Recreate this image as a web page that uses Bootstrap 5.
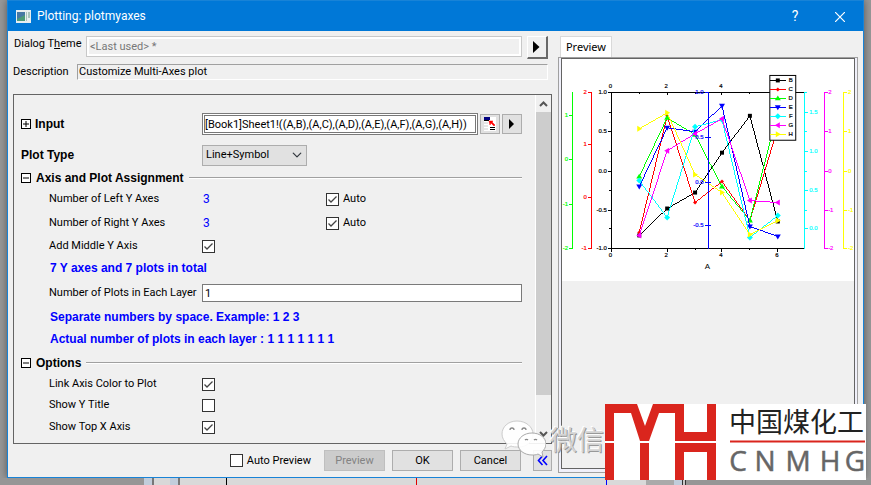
<!DOCTYPE html>
<html lang="en">
<head>
<meta charset="utf-8">
<meta name="viewport" content="width=device-width, initial-scale=1">
<title>Plotting: plotmyaxes</title>
<link href="https://cdn.jsdelivr.net/npm/bootstrap@5.3.0/dist/css/bootstrap.min.css" rel="stylesheet">
<style>
body{background:#999;font-family:Roboto,"Liberation Sans",sans-serif;font-size:11px;line-height:16px;color:#000;overflow:hidden}
.dialog{background:#f0f0f0;border:1px solid #1883d7;margin:0 7px;box-shadow:0 0 8px #555}
.titlebar{background:#0078d7;color:#fff;height:30px;font-family:Roboto,sans-serif;font-size:12px;padding:0 15px 0 8px;gap:6px}
.titlebar button{background:none;border:0;color:#fff;padding:0;width:16px;font-size:14px}
.caption-gap{gap:29px}
.leftside{flex:546 1 0;min-width:0;padding:5px 0 6px 5px}
.rightside{flex:304 1 0;min-width:0;padding:5px 5px 4px 6px}
input,select,.btn{border-radius:0!important}
.theme-box{height:21px;background:#f0f0f0;border:1px solid #c8c8c8;outline:2px solid #fff;outline-offset:-3px;color:#777;padding:0 3px;min-width:0}
.desc-box{height:16px;background:#f0f0f0;border:1px solid #a0a0a0;border-right-color:#fff;border-bottom-color:#fff;padding:0 1px;min-width:0}
.raised{width:21px;height:23px;background:#f0f0f0;border:1px solid #fff;border-right:2px solid #696969;border-bottom:2px solid #696969;padding:0}
.theme-row{padding:0 4px 0 1px;gap:5px}
.desc-row{padding:0 4px 0 0;margin:5px 0 14px}
.w-theme{width:67px;white-space:nowrap}.w-desc{width:64px}
.tree{border:1px solid #646464}
.fields{padding:12px 13px 6px 0}
.r18{height:18px}.r20{height:20px}.r22{height:22px}.r24{height:24px}.r28{height:28px}.r34{height:34px}
.cap{width:188px;flex:none;padding-left:35px;white-space:nowrap}
.cap-top{padding-left:7px}
.strong{font-family:"Liberation Sans",sans-serif;font-size:12px;font-weight:700;white-space:nowrap}
.note{color:#00f;padding-left:36px}
.head{padding-left:7px;gap:5px}
.head::after{content:"";flex:1;height:2px;background:#a0a0a0;border-bottom:1px solid #fff}
.toggle{width:10px;height:10px;border:1px solid #000;background:#fff;padding:0;display:grid;place-items:center;flex:none}
.value{color:#00f;width:124px;padding-left:1px;font-size:12px}
.form-check-input{width:13px;height:13px;margin:0;border:1px solid #333;background-color:#fff;flex:none}
.form-check-input:checked{background-color:#fff;border-color:#333;background-image:url("data:image/svg+xml,%3Csvg xmlns='http://www.w3.org/2000/svg' viewBox='0 0 11 11'%3E%3Cpath d='M1.5 5.5 4 8 9.5 2.5' fill='none' stroke='%23444' stroke-width='1.3'/%3E%3C/svg%3E")}
.range{height:22px;border:1px solid #7a7a7a;outline:1px solid #777;outline-offset:-3px;padding:0 2px;min-width:0}
.small-btn{width:20px;height:20px;background:#e1e1e1;border:1px solid #adadad;padding:0;flex:none}
.range-row{gap:2px}
.range-row .cap{margin-right:-2px}
.form-select{width:105px;height:21px;background-color:#e1e1e1;border:1px solid #adadad;padding:0 18px 0 3px;font-size:11px;line-height:16px;background-size:10px;background-position:right 4px center;color:#000}
.layers{height:18px;border:1px solid #7a7a7a;padding:0 2px;min-width:0}
.scroller{width:16px;border-left:1px solid #fff}
.thumb{background:#cdcdcd;flex:283 1 0}
.rest{flex:31 1 0}
.foot{gap:7px;margin-top:6px}
.foot .btn{height:21px;width:61px;background:#e1e1e1;border:1px solid #adadad;padding:0;font-size:11px;line-height:16px;color:#000}
.foot .btn:disabled{background:#ccc;border-color:#bfbfbf;color:#838383;opacity:1}
.foot .btn.fold{width:19px;margin-left:5px}
.auto-prev{margin-right:6px}
.tabname{background:#fff;border:1px solid #d9d9d9;border-bottom:0;width:52px;height:21px;padding:0;margin-left:2px;font-family:"Noto Sans",sans-serif;font-size:11px}
.pane{border:1px solid #a0a0a0;background:#f0f0fa;padding:0 2px 3px}
.canvas{border:1px solid #646464;background:#f0f0f0}
.canvas svg{background:#fff}
.behind{height:7px;background:linear-gradient(90deg,#969696 144px,#c1cddb 144px 152px,#777 152px 154px,#d8d8d8 154px 170px,#c1cddb 170px 178px,#777 178px 180px,#d9d9d9 180px 226px,#000 226px 227px,#d9d9d9 227px 416px,#e00000 416px 417px,#d9d9d9 417px 606px,#00f 606px 607px,#d9d9d9 607px 646px,#aaa 646px 674px,#c1cddb 674px 682px,#333 682px 683px,#c8c8c8 683px 685px,#333 685px 686px,#969696 686px)}
.stamp{position:absolute;right:265px;bottom:24px;height:44px;width:106px;pointer-events:none}
.stamp span{font:27px/40px "Noto Sans CJK SC",sans-serif;color:#d4d4d4;text-shadow:1px 1px 0 #999,-1px -1px 0 #fff;white-space:nowrap}
.brand{position:absolute;right:5px;bottom:5px;width:261px;height:76px;background:#fff;overflow:hidden}
</style>
<script src="https://cdn.jsdelivr.net/npm/bootstrap@5.3.0/dist/js/bootstrap.bundle.min.js"></script>
</head>
<body class="d-flex flex-column min-vh-100 position-relative">
<main class="dialog d-flex flex-column flex-grow-1">
  <header class="titlebar d-flex align-items-center">
    <svg width="15" height="13" viewBox="0 0 15 13"><rect width="15" height="13" fill="#e8eef0"/><rect x="1" y="2" width="8" height="9" fill="#4b9a78"/><path d="M1 2h8v3l-8 4z" fill="#4679a5"/><path d="M10 2h1v9h-1zM12 2h2v6h-2z" fill="#a8c4bc"/></svg>
    <span class="flex-grow-1">Plotting: plotmyaxes</span>
    <div class="d-flex caption-gap align-items-center">
      <button type="button" aria-label="Help">?</button>
      <button type="button" aria-label="Close"><svg width="10" height="10" viewBox="0 0 10 10"><path d="M0 0 10 10M10 0 0 10" stroke="#fff" stroke-width="1.2"/></svg></button>
    </div>
  </header>
  <div class="d-flex flex-grow-1">
    <form class="leftside d-flex flex-column">
      <div class="theme-row d-flex align-items-start">
        <label class="w-theme flex-shrink-0" for="theme">Dialog T<u>h</u>eme</label>
        <input id="theme" class="theme-box flex-grow-1" value="&lt;Last used&gt; *" readonly>
        <button type="button" class="raised" aria-label="Theme menu"><svg width="7" height="12" viewBox="0 0 7 12"><path d="M0 0 6.500 6 0 12z"/></svg></button>
      </div>
      <div class="desc-row d-flex align-items-center">
        <label class="w-desc flex-shrink-0" for="desc">Description</label>
        <input id="desc" class="desc-box flex-grow-1" value="Customize Multi-Axes plot" readonly>
      </div>
      <section class="tree d-flex flex-grow-1">
        <div class="fields flex-grow-1">
          <div class="range-row d-flex align-items-center r34">
            <div class="cap cap-top strong d-flex align-items-center gap-1"><button type="button" class="toggle" aria-label="Expand Input"><svg class="d-block" width="8" height="8"><path d="M1 4h6M4 1v6" stroke="#000"/></svg></button><label for="range">Input</label></div>
            <input id="range" class="range flex-grow-1" value="[Book1]Sheet1!((A,B),(A,C),(A,D),(A,E),(A,F),(A,G),(A,H))">
            <button type="button" class="small-btn" aria-label="Select range"><svg class="d-block mx-auto" width="12" height="14" viewBox="0 0 12 14"><path d="M0 0h12v14H0z" fill="#fff"/><path d="M0 0h6v3H0z" fill="#000080"/><path d="M0 3h5v1H0zM6 10h5v1H6zM6 12h5v1H6z"/><path d="M0 6h4M0 9h4M0 12h4" stroke="#ccc"/><path d="M5 4h4L8 5l3 3-1 1-3-3-1 2z" fill="red" stroke="red" stroke-width=".5"/></svg></button>
            <button type="button" class="small-btn" aria-label="Range menu"><svg class="d-block mx-auto" width="5" height="10" viewBox="0 0 5 10"><path d="M0 0 5 5 0 10z"/></svg></button>
          </div>
          <div class="d-flex align-items-center r28">
            <label class="cap cap-top strong" for="ptype">Plot Type</label>
            <select id="ptype" class="form-select"><option>Line+Symbol</option></select>
          </div>
          <div class="head strong d-flex align-items-center r18"><button type="button" class="toggle" aria-label="Collapse Axis and Plot Assignment"><svg class="d-block" width="8" height="8"><path d="M1 4h6" stroke="#000"/></svg></button>Axis and Plot Assignment</div>
          <div class="d-flex align-items-center r24"><span class="cap">Number of Left Y Axes</span><span class="value">3</span><input id="a1" type="checkbox" class="form-check-input" checked><label class="ps-1" for="a1">Auto</label></div>
          <div class="d-flex align-items-center r24"><span class="cap">Number of Right Y Axes</span><span class="value">3</span><input id="a2" type="checkbox" class="form-check-input" checked><label class="ps-1" for="a2">Auto</label></div>
          <div class="d-flex align-items-center r22"><label class="cap" for="mid">Add Middle Y Axis</label><input id="mid" type="checkbox" class="form-check-input" checked></div>
          <div class="note strong d-flex align-items-center r22">7 Y axes and 7 plots in total</div>
          <div class="d-flex align-items-center r28"><label class="cap" for="layers">Number of Plots in Each Layer</label><input id="layers" class="layers flex-grow-1" value="1"></div>
          <div class="note strong d-flex align-items-center r20">Separate numbers by space. Example: 1 2 3</div>
          <div class="note strong d-flex align-items-center r24">Actual number of plots in each layer : 1 1 1 1 1 1 1</div>
          <div class="head strong d-flex align-items-center r24"><button type="button" class="toggle" aria-label="Collapse Options"><svg class="d-block" width="8" height="8"><path d="M1 4h6" stroke="#000"/></svg></button>Options</div>
          <div class="d-flex align-items-center r18"><label class="cap" for="link">Link Axis Color to Plot</label><input id="link" type="checkbox" class="form-check-input" checked></div>
          <div class="d-flex align-items-center r24"><label class="cap" for="yt">Show Y Title</label><input id="yt" type="checkbox" class="form-check-input"></div>
          <div class="d-flex align-items-center r20"><label class="cap" for="xt">Show Top X Axis</label><input id="xt" type="checkbox" class="form-check-input" checked></div>
        </div>
        <div class="scroller d-flex flex-column align-items-stretch">
          <svg width="15" height="17" viewBox="0 0 15 17"><path d="M4 11 7.500 7.500 11 11" fill="none" stroke="#555" stroke-width="2"/></svg>
          <div class="thumb"></div><div class="rest"></div>
          <svg width="15" height="17" viewBox="0 0 15 17"><path d="M4 6 7.500 9.500 11 6" fill="none" stroke="#555" stroke-width="2"/></svg>
        </div>
      </section>
      <div class="foot d-flex justify-content-end align-items-center">
        <div class="auto-prev d-flex align-items-center"><input id="ap" type="checkbox" class="form-check-input"><label class="ps-1" for="ap">Auto Preview</label></div>
        <button type="button" class="btn" disabled>Preview</button>
        <button type="submit" class="btn">OK</button>
        <button type="button" class="btn">Cancel</button>
        <button type="button" class="btn fold" aria-label="Hide preview"><svg class="d-block mx-auto" width="11" height="11" viewBox="0 0 11 11"><path d="M5.500 1 1.500 5.500l4 4.500M10 1 6 5.500l4 4.500" fill="none" stroke="#00f" stroke-width="1.6"/></svg></button>
      </div>
    </form>
    <section class="rightside d-flex flex-column">
      <button type="button" class="tabname">Preview</button>
      <div class="pane flex-grow-1">
        <div class="canvas h-100"><svg id="plot" class="d-block w-100" viewBox="562 59 293 223" font-family="Liberation Sans,sans-serif" font-size="6" role="img" aria-label="Multi-axes plot"></svg></div>
      </div>
    </section>
  </div>
</main>
<div class="behind"></div>
<div class="stamp d-flex align-items-center">
  <svg class="flex-shrink-0" width="46" height="42" viewBox="0 0 46 42"><g fill="#fff" fill-opacity=".9"><path d="M17 3C8 3 2 9 2 16c0 4 2 7 5 10l-2 5 6-3c2 1 5 1 8 1 8 0 14-6 14-13S26 3 17 3z" stroke="#ccc"/><path d="M32 15c-8 0-14 5-14 11s6 11 14 11c2 0 4 0 6-1l5 3-1-5c2-2 4-5 4-8 0-6-6-11-14-11z" stroke="#aaa"/></g><g fill="none" stroke="#888" stroke-width="1.300"><path d="M10 12a2 2 0 0 1 4 0M22 12a2 2 0 0 1 4 0M25 22a2 2 0 0 1 3 0M34 22a2 2 0 0 1 3 0"/></g></svg>
  <span class="ms-1">微信</span>
</div>
<svg class="brand" viewBox="0 0 261 76" role="img" aria-label="中国煤化工 CNMHG">
  <path fill="#da251d" d="M0 0h32l8 22L48 0h31v28h23V0h9v76h-9V48H79v28h-9V9H54L44 37v39h-9V37L26 9H9v67H0z"/>
  <path d="M0 38h111" stroke="#fff" stroke-width="2"/><path d="M125 37.500h135" stroke="#da251d" stroke-width="2"/>
  <text x="124" y="28" font-family="Noto Sans CJK SC,sans-serif" font-size="27" fill="#222">中国煤化工</text>
  <g font-family="Open Sans,sans-serif" font-size="28" fill="#666" stroke="#666" stroke-width=".5" text-anchor="middle"><text x="133" y="67">C</text><text x="160" y="67">N</text><text x="193" y="67">M</text><text x="225" y="67">H</text><text x="250" y="67">G</text></g>
</svg>
<script>
const out=[];
const line=(x1,y1,x2,y2,c)=>out.push(`<path d="M${x1} ${y1}L${x2} ${y2}" stroke="${c}" fill="none" shape-rendering="crispEdges"/>`);
const label=(x,y,t,c,a='middle')=>out.push(`<text x="${x}" y="${y+2}" fill="${c}" stroke="${c}" stroke-width=".2" text-anchor="${a}">${t}</text>`);
function axis(x,c,ticks,dir,lx,anchor,minor=[]){
  line(x,92,x,250,c);
  ticks.forEach(([y,t])=>{line(x,y+.5,x+dir*3,y+.5,c);label(lx,y,t,c,anchor)});
  minor.forEach(y=>line(x,y+.5,x+dir*2,y+.5,c));
}
axis(572.5,'#0f0',[[115,'1'],[159,'0'],[204,'-1'],[249,'-2']],-1,568,'end');
axis(591.5,'#f00',[[92,'2'],[144,'1'],[197,'0'],[249,'-1']],-1,587,'end');
axis(611.5,'#000',[[92,'1.0'],[131,'0.5'],[171,'0.0'],[210,'-0.5'],[249,'-1.0']],-1,607,'end',[112,151,190,229]);
line(611,92.5,805,92.5,'#000');line(611,249.5,805,249.5,'#000');
[['0',611.5],['2',667.5],['4',722.5],['6',778.5]].forEach(([t,x])=>{line(x,92,x,95,'#000');line(x,249,x,253,'#000');label(x-1,86,t,'#000');label(x-1,256,t,'#000')});
[639.5,695.5,750.5].forEach(x=>{line(x,92,x,94,'#000');line(x,249,x,251,'#000')});
out.push('<text x="708" y="270" text-anchor="middle" font-size="8">A</text>');
const shapes=['M-2-2h4v4h-4z','M-2 0 0-2 2 0 0 2z','M-3 2h6L0-3z','M-3-2h6L0 3z','M-3 0 0-3 3 0 0 3z','M-3 0 2-3v6z','M3 0-2-3v6z'];
const series=[
 ['B','#000',[236,209,193,153,116,222]],['C','#f00',[233,116,203,182,221,128]],
 ['D','#0f0',[177,118,135,187,221,112]],['E','#00f',[187,128,132,106,227,237]],
 ['F','#0ff',[181,218,127,120,238,216]],['G','#f0f',[236,151,134,119,201,203]],
 ['H','#ff0',[129,113,175,193,235,221]]];
const xs=[639.5,667.5,695.5,722.5,750.5,778.5];
series.forEach(([n,c,ys],i)=>{
  out.push(`<polyline fill="none" stroke="${c}" shape-rendering="crispEdges" points="${xs.map((x,k)=>x+','+ys[k]).join(' ')}"/>`);
  xs.forEach((x,k)=>out.push(`<path d="${shapes[i]}" transform="translate(${x} ${ys[k]})" fill="${c}"/>`));
});
axis(708.5,'#00f',[[92,'1.0'],[137,'0.5'],[182,'0.0'],[226,'-0.5']],-1,704,'end');
[137,182,226].forEach(y=>line(708,y+.5,711,y+.5,'#00f'));
axis(805.5,'#0ff',[[112,'1.5'],[151,'1.0'],[190,'0.5'],[229,'0.0']],1,810,'start',[92,131,171,210]);
const side=[[92,'2'],[131,'1'],[171,'0'],[210,'-1'],[249,'-2']];
axis(825.5,'#f0f',side,1,829,'start');
axis(844.5,'#ff0',side,1,849,'start');
out.push('<rect x="770.5" y="75.500" width="26" height="65" fill="#fff" stroke="#000"/>');
series.forEach(([n,c],i)=>{const y=80.5+i*9;line(771,y,787,y,c);out.push(`<path d="${shapes[i]}" transform="translate(778.5 ${y})" fill="${c}"/>`);label(791.5,y,n,'#000')});
document.getElementById('plot').innerHTML=out.join('');
</script>
</body>
</html>
